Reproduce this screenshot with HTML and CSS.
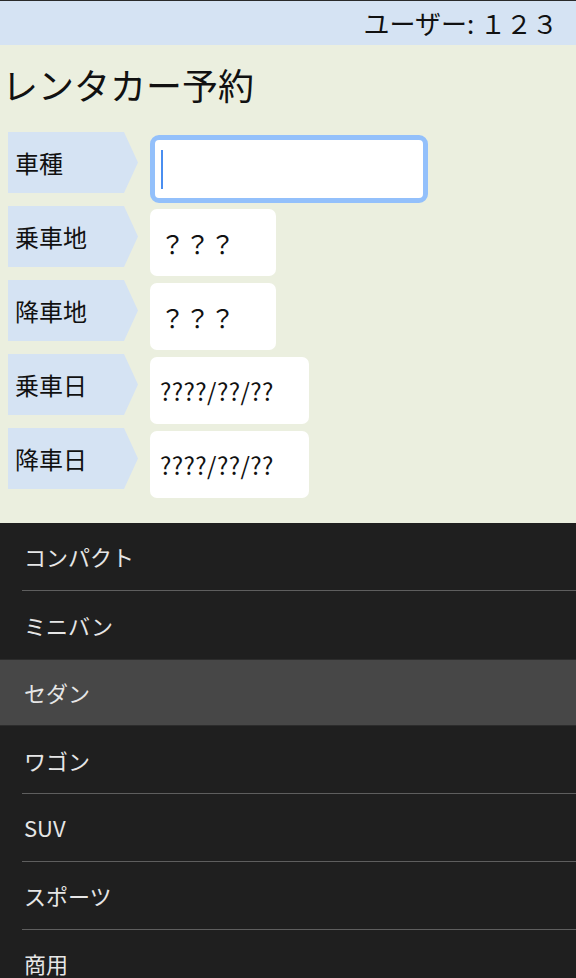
FILE: index.html
```html
<!DOCTYPE html>
<html lang="ja">
<head>
    <meta charset="UTF-8">
    <meta name="viewport" content="width=device-width, initial-scale=1.0">
    <title>レンタカー予約</title>
    <link rel="stylesheet" href="styles.css">
</head>
<body>

<header class="user-bar">ユーザー: １２３</header>

<h1 class="page-title">レンタカー予約</h1>

<!-- Reservation form -->
<div class="form">
    <div class="form-row">
        <div class="label">車種</div>
        <div class="field field-focus"><span class="caret"></span></div>
    </div>
    <div class="form-row">
        <div class="label">乗車地</div>
        <div class="field field-place">？？？</div>
    </div>
    <div class="form-row">
        <div class="label">降車地</div>
        <div class="field field-place">？？？</div>
    </div>
    <div class="form-row">
        <div class="label">乗車日</div>
        <div class="field field-date">????/??/??</div>
    </div>
    <div class="form-row">
        <div class="label">降車日</div>
        <div class="field field-date">????/??/??</div>
    </div>
</div>

<!-- Car type dropdown -->
<ul class="dropdown">
    <li class="item"><span>コンパクト</span></li>
    <li class="item no-line"><span>ミニバン</span></li>
    <li class="item selected"><span>セダン</span></li>
    <li class="item"><span>ワゴン</span></li>
    <li class="item"><span>SUV</span></li>
    <li class="item"><span>スポーツ</span></li>
    <li class="item"><span>商用</span></li>
</ul>

</body>
</html>
```

FILE: styles.css
```css
body {
    font-family: "Noto Sans CJK JP", "Noto Sans", sans-serif;
    margin: 0;
    padding: 0;
    background-color: #ebefdf;
    color: #111;
    overflow: hidden;
}

.user-bar {
    height: 44px;
    border-top: 1px solid #2a2a2a;
    background-color: #d5e3f3;
    text-align: right;
    padding-right: 18px;
    font-size: 26px;
    line-height: 44px;
}

.page-title {
    margin: 0;
    padding: 14px 0 0 2px;
    height: 87px;
    box-sizing: border-box;
    font-size: 36px;
    font-weight: normal;
    line-height: 50px;
}

/* Form rows */
.form {
    padding: 0 0 21px 8px;
}

.form-row {
    display: flex;
    align-items: flex-start;
    height: 74px;
}

.label {
    width: 130px;
    height: 61px;
    padding-left: 7px;
    box-sizing: border-box;
    background-color: #d5e3f3;
    clip-path: polygon(0 0, 116px 0, 130px 50%, 116px 100%, 0 100%);
    font-size: 24px;
    line-height: 61px;
}

.field {
    margin: 3px 0 0 12px;
    height: 67px;
    box-sizing: border-box;
    background-color: #fff;
    border-radius: 7px;
    padding-left: 10px;
    display: flex;
    align-items: center;
}

.field-focus {
    width: 278px;
    height: 68px;
    border: 5px solid #93c0fb;
    border-radius: 9px;
    padding-left: 6px;
}

.caret {
    width: 2px;
    height: 39px;
    background-color: #4a8ef0;
}

.field-place {
    width: 126px;
    font-size: 25px;
}

.field-date {
    width: 159px;
    font-size: 24px;
    letter-spacing: 0.4px;
}

/* Dropdown list */
.dropdown {
    list-style: none;
    margin: 0;
    padding: 0;
    background-color: #1f1f1f;
    color: #e6e6e6;
    font-size: 22px;
}

.item {
    height: 67.75px;
    padding-left: 22px;
    box-sizing: border-box;
}

.item span {
    display: flex;
    align-items: center;
    height: 100%;
    padding-left: 2px;
    box-sizing: border-box;
    border-bottom: 1px solid #5e5e5e;
}

.item.no-line span {
    border-bottom: none;
}

.item.selected {
    background-color: #474747;
    border-top: 1px solid #2c2c2c;
    border-bottom: 1px solid #2c2c2c;
}

.item.selected span {
    border-bottom: none;
}
```
